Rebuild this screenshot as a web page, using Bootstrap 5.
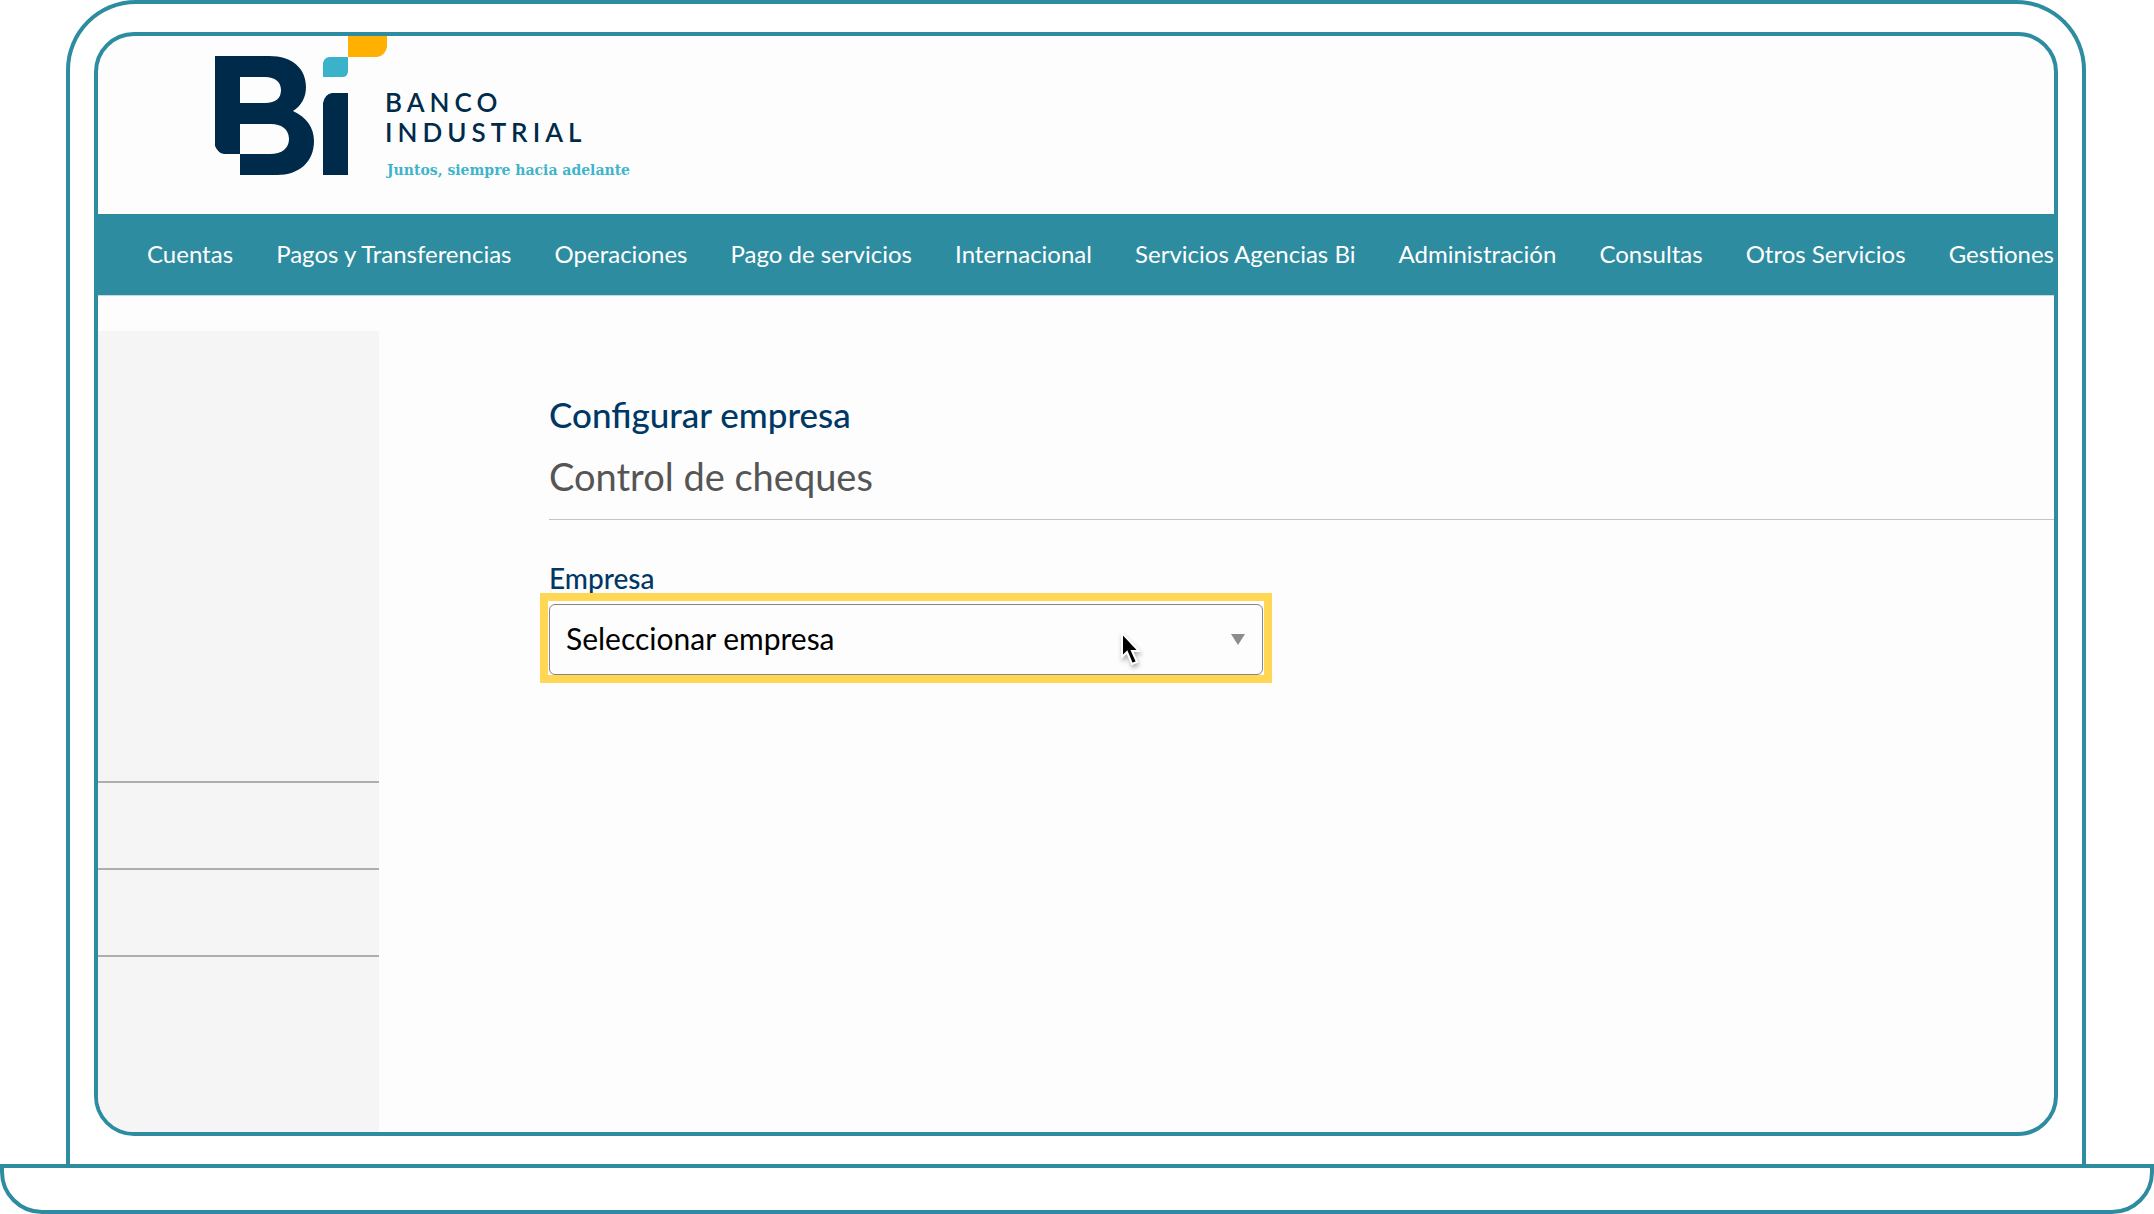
<!DOCTYPE html>
<html lang="es">
<head>
<meta charset="utf-8">
<meta name="viewport" content="width=device-width, initial-scale=1">
<title>Banco Industrial - Configurar empresa</title>
<link href="https://cdn.jsdelivr.net/npm/bootstrap@5.3.0/dist/css/bootstrap.min.css" rel="stylesheet">
<style>
:root { --teal: #2d8ca0; --navy: #002a4a; --heading: #003865; --paper: #fdfdfd; }
body { font-family: Lato, "Open Sans", sans-serif; background: #fff; color: #000; }
.device-lid { margin: 0 68px 0 66px; padding: 28px 24px; border: 4px solid var(--teal); border-bottom: 0; border-radius: 70px 70px 0 0; }
.device-base { height: 50px; border: 4px solid var(--teal); border-radius: 0 0 42px 42px; }
.device-screen { border: 4px solid var(--teal); border-radius: 40px; background: var(--paper); }
.brand-bar { height: 178px; padding-left: 117px; }
.brand-mark { width: 172px; height: 140px; }
.brand-name { color: var(--navy); font-size: 26px; line-height: 30px; font-weight: 600; letter-spacing: 5px; margin: 51px 0 0 -2px; }
.brand-motto { color: #3fb4cb; font-family: "DejaVu Serif", serif; font-size: 14px; line-height: 20px; font-weight: 700; margin-top: 13px; }
.main-menu { height: 82px; padding: 0 0 2px 49px; background: var(--teal); border-bottom: 1px solid #c9d9e4; }
.main-menu .nav-link { color: #fff; font-size: 24px; line-height: 32px; padding: 0; white-space: nowrap; }
.side-panel { width: 281px; margin-top: 35px; padding-top: 450px; background: #f5f5f5; }
.side-slot { height: 87px; border-top: 2px solid #aeaeae; }
.work-area { padding: 98px 0 0 170px; }
.page-title { color: var(--heading); font-size: 35px; line-height: 40px; font-weight: 500; margin: 0 0 20px; }
.page-subtitle { color: #555; font-size: 38px; line-height: 44px; font-weight: 400; margin: 0 0 43px; padding-bottom: 21px; border-bottom: 1px solid #c4c4c4; }
.field-label { color: var(--heading); font-size: 28px; line-height: 30px; font-weight: 500; }
.field-focus { width: 732px; max-width: 100%; margin-left: -9px; padding: 3px 1px 0; border: 8px solid #ffd755; background: #fff; }
.company-select { height: 71px; padding: 0 48px 2px 16px; font-size: 30px; color: #000; border: 1px solid #858585; border-radius: 6px; background-color: var(--paper);
  background-image: url("data:image/svg+xml,%3Csvg xmlns='http://www.w3.org/2000/svg' viewBox='0 0 14 11'%3E%3Cpath d='M0 0h14L7 11z' fill='%238c8c8c'/%3E%3C/svg%3E"); background-size: 14px 11px; background-position: right 17px center; }
.pointer { left: 571px; top: 30px; width: 28px; height: 40px; filter: drop-shadow(1px 3px 2px rgba(0,0,0,.3)); }
</style>
<script src="https://cdn.jsdelivr.net/npm/bootstrap@5.3.0/dist/js/bootstrap.bundle.min.js" defer></script>
</head>
<body>
<div class="d-flex flex-column min-vh-100">
  <div class="device-lid d-flex flex-column flex-grow-1">
    <div class="device-screen d-flex flex-column flex-grow-1 overflow-hidden">
      <header class="brand-bar d-flex align-items-start">
        <svg class="brand-mark flex-shrink-0" viewBox="0 0 172 140" role="img" aria-label="Bi">
          <path fill="#002a4a" fill-rule="evenodd" d="M0 20H54C78 20 91 33 91 51C91 62 86 70 78 75C91 81 99 91 99 105C99 126 84 139 62 139H25V118H9Q3 117 0 110ZM25 41V67H50C61 67 66 62 66 54C66 46 60 41 50 41ZM25 88V118H55C67 118 74 112 74 103C74 93 66 88 56 88Z"/>
          <path fill="#002a4a" d="M117 57H133V139H108V67Q110 58 117 57Z"/>
          <path fill="#39b2ca" d="M114 21H133V36Q132 41 128 41H108V27Q109 22 114 21Z"/>
          <path fill="#ffb000" d="M133 0H172V11Q170 20 162 21H133Z"/>
        </svg>
        <div>
          <div class="brand-name">BANCO<br>INDUSTRIAL</div>
          <div class="brand-motto">Juntos, siempre hacia adelante</div>
        </div>
      </header>
      <nav class="main-menu d-flex align-items-center justify-content-between" aria-label="Principal">
        <a class="nav-link" href="#">Cuentas</a>
        <a class="nav-link" href="#">Pagos y Transferencias</a>
        <a class="nav-link" href="#">Operaciones</a>
        <a class="nav-link" href="#">Pago de servicios</a>
        <a class="nav-link" href="#">Internacional</a>
        <a class="nav-link" href="#">Servicios Agencias Bi</a>
        <a class="nav-link" href="#">Administración</a>
        <a class="nav-link" href="#">Consultas</a>
        <a class="nav-link" href="#">Otros Servicios</a>
        <a class="nav-link" href="#">Gestiones</a>
      </nav>
      <div class="d-flex flex-grow-1">
        <aside class="side-panel flex-shrink-0">
          <div class="side-slot"></div>
          <div class="side-slot"></div>
          <div class="side-slot"></div>
        </aside>
        <main class="work-area flex-grow-1">
          <h1 class="page-title">Configurar empresa</h1>
          <h2 class="page-subtitle">Control de cheques</h2>
          <label class="field-label d-block" for="empresa">Empresa</label>
          <div class="field-focus position-relative">
            <select class="form-select company-select" id="empresa">
              <option>Seleccionar empresa</option>
            </select>
            <svg class="pointer position-absolute pe-none" viewBox="0 0 28 40" aria-hidden="true">
              <path d="M3 2V26L8 21L13 33L18 31L13 20H20Z" fill="#000" stroke="#fff" stroke-width="2"/>
            </svg>
          </div>
        </main>
      </div>
    </div>
  </div>
  <div class="device-base"></div>
</div>
</body>
</html>
